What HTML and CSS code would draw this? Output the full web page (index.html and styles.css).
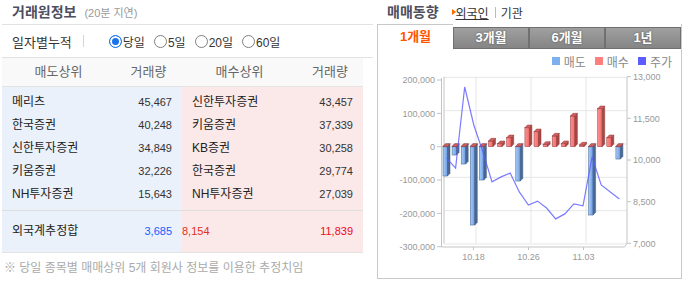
FILE: index.html
```html
<!DOCTYPE html>
<html lang="ko">
<head>
  <meta charset="UTF-8">
  <title>거래원정보 - 매매동향</title>
  <link rel="stylesheet" href="styles.css">
</head>
<body>

  <div class="wrap">
    <div class="trader-info">
      <div class="panel-title">
        <h2>거래원정보</h2>
        <span class="delay">(20분 지연)</span>
      </div>

      <div class="period">
        <span class="period-label">일자별누적</span>
        <span class="bar-sep"></span>
        <label><input type="radio" name="period" checked>당일</label>
        <label><input type="radio" name="period">5일</label>
        <label><input type="radio" name="period">20일</label>
        <label><input type="radio" name="period">60일</label>
      </div>

      <div class="trade-table">
        <div class="thead">
          <span>매도상위</span><span>거래량</span><span>매수상위</span><span>거래량</span>
        </div>
        <div class="tbody" id="broker-list">
          <!-- rows rendered by script -->
        </div>
        <div class="total">
          <span class="name">외국계추정합</span>
          <span class="num sell-sum">3,685</span>
          <span class="net">8,154</span>
          <span class="num buy-sum">11,839</span>
        </div>
      </div>

      <p class="note">※ 당일 종목별 매매상위 5개 회원사 정보를 이용한 추정치임</p>
    </div>

    <div class="trend">
      <div class="trend-title">
        <h2>매매동향</h2>
        <span class="arrow"></span>
        <a href="#" class="on">외국인</a>
        <span class="sep"></span>
        <a href="#">기관</a>
      </div>

      <div class="chart-box">
        <div class="tabs">
          <span class="tab active">1개월</span>
          <span class="tab">3개월</span>
          <span class="tab">6개월</span>
          <span class="tab">1년</span>
        </div>

        <div class="legend">
          <span><i class="lg-sell"></i>매도</span>
          <span><i class="lg-buy"></i>매수</span>
          <span><i class="lg-price"></i>주가</span>
        </div>

        <svg class="chart" width="303" height="207" viewBox="378 71 303 207">
          <defs>
            <linearGradient id="sellGrad" x1="0" x2="1" y1="0" y2="0">
              <stop offset="0" stop-color="#a9cdf9"/>
              <stop offset="1" stop-color="#6b9de3"/>
            </linearGradient>
            <linearGradient id="buyGrad" x1="0" x2="1" y1="0" y2="0">
              <stop offset="0" stop-color="#ff9090"/>
              <stop offset="1" stop-color="#f46a6a"/>
            </linearGradient>
          </defs>
          <g id="grid"></g>
          <g id="bars"></g>
          <g id="line"></g>
          <g id="axes"></g>
        </svg>
      </div>
    </div>
  </div>

  <script>
    const brokers = [
      { sell: "메리츠", sellVol: 45467, buy: "신한투자증권", buyVol: 43457 },
      { sell: "한국증권", sellVol: 40248, buy: "키움증권", buyVol: 37339 },
      { sell: "신한투자증권", sellVol: 34849, buy: "KB증권", buyVol: 30258 },
      { sell: "키움증권", sellVol: 32226, buy: "한국증권", buyVol: 29774 },
      { sell: "NH투자증권", sellVol: 15643, buy: "NH투자증권", buyVol: 27039 }
    ];

    function fmt(n) {
      return n.toLocaleString("en-US");
    }

    function renderBrokers() {
      const list = document.getElementById("broker-list");
      list.innerHTML = "";
      brokers.forEach(b => {
        const row = document.createElement("div");
        row.className = "row";
        row.innerHTML = `
          <span class="name">${b.sell}</span>
          <span class="num">${fmt(b.sellVol)}</span>
          <span class="name">${b.buy}</span>
          <span class="num">${fmt(b.buyVol)}</span>
        `;
        list.appendChild(row);
      });
    }

    // foreigner net trading, last 20 sessions
    const sells = [-88000, -25000, -52000, -235000, -100000, 0, 0, 0, -103000, 0,
                   0, 0, 0, 0, 0, 0, -205000, 0, 0, -37000];
    const buys = [1000, 1000, 1000, 1000, 1000, 17000, 9000, 27000, 1000, 57000,
                  45000, 7000, 32000, 9000, 92000, 5000, 1000, 114000, 27000, 1000];
    const prices = [10070, 9710, 12630, 11260, 10290, 9210, 9390, 9530, 8850, 8380,
                    8520, 8270, 7880, 8060, 8420, 8350, 10110, 9100, 8850, 8600];

    const ZERO = 146.7, PX = 33.33 / 100000;
    const X0 = 443, STEP = 9.1, W = 4.5, DX = 2.5, DY = 2.7;
    const LEFT = 441.5, WALL_L = 444, WALL_R = 627, BOTTOM = 247;

    function priceY(p) {
      return 76.7 + (13000 - p) * (166.6 / 6000);
    }

    function poly(pts, cls) {
      return `<polygon class="${cls}" points="${pts.map(p => p.join(",")).join(" ")}"/>`;
    }

    function bar(x, v, kind) {
      const y = ZERO - v * PX;
      const top = Math.min(y, ZERO), bot = Math.max(y, ZERO);
      return `<rect class="${kind}-front" x="${x}" y="${top}" width="${W}" height="${bot - top}"/>` +
        poly([[x + W, top], [x + W + DX, top - DY], [x + W + DX, bot - DY], [x + W, bot]], kind + "-side") +
        poly([[x, top], [x + DX, top - DY], [x + W + DX, top - DY], [x + W, top]], kind + "-top");
    }

    function renderChart() {
      const leftTicks = [200000, 100000, 0, -100000, -200000, -300000];
      const rightTicks = [13000, 11500, 10000, 8500, 7000];
      const dates = [{ x: 476, label: "10.18" }, { x: 531, label: "10.26" }, { x: 586, label: "11.03" }];

      let grid = "";
      leftTicks.forEach(v => {
        const y = ZERO - v * PX - DY;
        grid += `<line class="grid-line" x1="${WALL_L}" x2="${WALL_R}" y1="${y}" y2="${y}"/>`;
      });
      dates.forEach(d => {
        grid += `<line class="grid-line" x1="${d.x}" x2="${d.x}" y1="76.7" y2="243.3"/>`;
      });
      grid += `<line class="axis-line" x1="${WALL_L}" x2="${WALL_L}" y1="76.7" y2="243.3"/>`;
      document.getElementById("grid").innerHTML = grid;

      let bars = "";
      sells.forEach((v, i) => {
        if (v < 0) bars += bar(X0 + i * STEP, v, "sell");
      });
      buys.forEach((v, i) => {
        bars += bar(X0 + i * STEP, v, "buy");
      });
      document.getElementById("bars").innerHTML = bars;

      const pts = prices.map((p, i) => `${(X0 + 3.5 + i * STEP).toFixed(1)},${priceY(p).toFixed(1)}`);
      document.getElementById("line").innerHTML = `<polyline class="price-line" points="${pts.join(" ")}"/>`;

      let axes = `<line class="axis-line" x1="${LEFT}" x2="${LEFT}" y1="78" y2="${BOTTOM}"/>` +
        `<line class="axis-line" x1="${LEFT}" x2="${WALL_R - DX}" y1="${BOTTOM}" y2="${BOTTOM}"/>` +
        `<line class="axis-line" x1="${WALL_R - DX}" x2="${WALL_R}" y1="${BOTTOM}" y2="243.3"/>` +
        `<line class="axis-line" x1="${WALL_R}" x2="${WALL_R}" y1="76.7" y2="243.3"/>`;
      leftTicks.forEach(v => {
        const y = ZERO - v * PX;
        axes += `<line class="axis-line" x1="437" x2="${LEFT}" y1="${y}" y2="${y}"/>`;
        axes += `<text class="axis-text" x="435" y="${y + 3.3}" text-anchor="end">${fmt(v)}</text>`;
      });
      rightTicks.forEach(p => {
        const y = priceY(p);
        axes += `<line class="axis-line" x1="${WALL_R}" x2="631" y1="${y}" y2="${y}"/>`;
        axes += `<text class="axis-text" x="633" y="${y + 3.3}">${fmt(p)}</text>`;
      });
      dates.forEach(d => {
        const x = d.x - DX;
        axes += `<line class="axis-line" x1="${x}" x2="${x}" y1="${BOTTOM}" y2="250"/>`;
        axes += `<text class="axis-text" x="${x}" y="260" text-anchor="middle">${d.label}</text>`;
      });
      document.getElementById("axes").innerHTML = axes;
    }

    renderBrokers();
    renderChart();
  </script>

</body>
</html>
```

FILE: styles.css
```css
body {
  margin: 0;
  font-family: "Liberation Sans", "Noto Sans CJK KR", sans-serif;
  font-size: 12px;
  color: #333;
  background: #fff;
}

.wrap {
  display: flex;
}

/* left: 거래원정보 */

.trader-info {
  width: 371px;
  padding-left: 2px;
}

.panel-title,
.trend-title {
  display: flex;
  align-items: center;
  height: 24px;
  padding-left: 10px;
}

.panel-title {
  border-bottom: 1px solid #e2e2e2;
}

.panel-title h2,
.trend-title h2 {
  margin: 0;
  font-size: 14px;
  font-weight: 700;
  line-height: 24px;
  color: #4e4e5e;
}

.delay {
  margin-left: 8px;
  font-size: 11px;
  color: #999;
}

.period {
  display: flex;
  align-items: center;
  height: 32px;
  padding-left: 10px;
  border-bottom: 1px solid #e2e2e2;
}

.period-label {
  font-size: 13px;
}

.bar-sep {
  width: 1px;
  height: 12px;
  background: #d5d5d5;
  margin: 0 25px 0 11px;
}

.period label {
  display: flex;
  align-items: center;
  margin-right: 9px;
  font-size: 12px;
}

.period input {
  appearance: none;
  width: 13px;
  height: 13px;
  margin: 0 1px 0 0;
  border: 1px solid #808080;
  border-radius: 50%;
  background: #fff;
}

.period input:checked {
  border-color: #1a73e8;
  background: #1a73e8;
  box-shadow: inset 0 0 0 2px #fff;
}

.trade-table {
  width: 361px;
}

.thead,
.row,
.total {
  display: grid;
  grid-template-columns: 113px 67px 115px 66px;
}

.thead {
  height: 28px;
  line-height: 28px;
  background: #f9f9f9;
  border-bottom: 1px solid #e3e3e3;
  text-align: center;
  color: #666;
  font-size: 13px;
}

.tbody {
  padding: 4px 0;
  background: linear-gradient(to right, #eaf1fb 180px, #fbe9e9 180px);
  border-bottom: 1px solid #dedede;
}

.row {
  height: 23px;
  line-height: 23px;
  font-size: 12px;
}

.total {
  height: 41px;
  line-height: 41px;
  font-size: 12px;
  background: linear-gradient(to right, #eaf1fb 180px, #fbe9e9 180px);
  border-bottom: 1px solid #e3e3e3;
}

.name {
  padding-left: 10px;
  color: #222;
}

.num,
.net {
  font-size: 11px;
}

.num {
  text-align: right;
  padding-right: 10px;
  color: #333;
}

.total .sell-sum {
  color: #1a5cff;
}

.total .net {
  color: #e0321e;
}

.total .buy-sum {
  color: #ee0a1e;
}

.note {
  margin: 0;
  padding: 6px 0 0 2px;
  line-height: 18px;
  font-size: 12px;
  color: #aaa;
}

/* right: 매매동향 */

.trend {
  width: 305px;
  margin-left: 4px;
}

.arrow {
  width: 0;
  height: 0;
  margin-left: 13px;
  border-left: 4px solid #ff6a00;
  border-top: 3px solid transparent;
  border-bottom: 3px solid transparent;
}

.trend-title a {
  color: #333;
  font-size: 12px;
  text-decoration: none;
}

.trend-title a.on {
  text-decoration: underline;
}

.sep {
  width: 1px;
  height: 11px;
  background: #bbb;
  margin: 0 5px 0 6px;
}

.chart-box {
  border: 1px solid #c9c9c9;
  border-top: 0;
}

.tabs {
  display: flex;
  height: 25px;
}

.tab {
  box-sizing: border-box;
  flex: 0 0 76px;
  height: 22px;
  margin-top: 3px;
  line-height: 20px;
  text-align: center;
  font-size: 13px;
  font-weight: 700;
  color: #fff;
  background: linear-gradient(#a0a0a0, #858585);
  border: 1px solid #707070;
  text-shadow: 0 0 2px #4a4a4a;
}

.tab.active {
  flex-basis: 75px;
  height: 25px;
  margin-top: 0;
  line-height: 24px;
  background: #fff;
  border: 0;
  border-top: 1px solid #c9c9c9;
  color: #ff5500;
  text-shadow: none;
}

.legend {
  box-sizing: border-box;
  display: flex;
  justify-content: flex-end;
  align-items: center;
  gap: 9px;
  height: 22px;
  padding: 2px 9px 0 0;
  font-size: 12px;
  color: #888;
}

.legend span {
  display: flex;
  align-items: center;
  gap: 4px;
}

.legend i {
  width: 8px;
  height: 8px;
}

.lg-sell { background: #7fb0ee; }
.lg-buy { background: #ff7f7f; }
.lg-price { background: #5c5cff; }

.chart {
  display: block;
}

.grid-line {
  stroke: #e6e6e6;
  stroke-width: 1;
}

.axis-line {
  stroke: #c4c4c4;
  stroke-width: 1;
}

.axis-text {
  font-family: "Liberation Sans", sans-serif;
  font-size: 9px;
  fill: #999;
}

.sell-front { fill: url(#sellGrad); stroke: #3e5d8a; stroke-width: 0.5; }
.sell-side { fill: #4b6792; stroke: #3e5d8a; stroke-width: 0.5; }
.sell-top { fill: #8fb6ea; stroke: #3e5d8a; stroke-width: 0.5; }

.buy-front { fill: url(#buyGrad); stroke: #8f3b3b; stroke-width: 0.5; }
.buy-side { fill: #a94545; stroke: #8f3b3b; stroke-width: 0.5; }
.buy-top { fill: #d55f5f; stroke: #8f3b3b; stroke-width: 0.5; }

.price-line {
  fill: none;
  stroke: #5a5aff;
  stroke-width: 1.2;
  stroke-opacity: 0.8;
}
```
